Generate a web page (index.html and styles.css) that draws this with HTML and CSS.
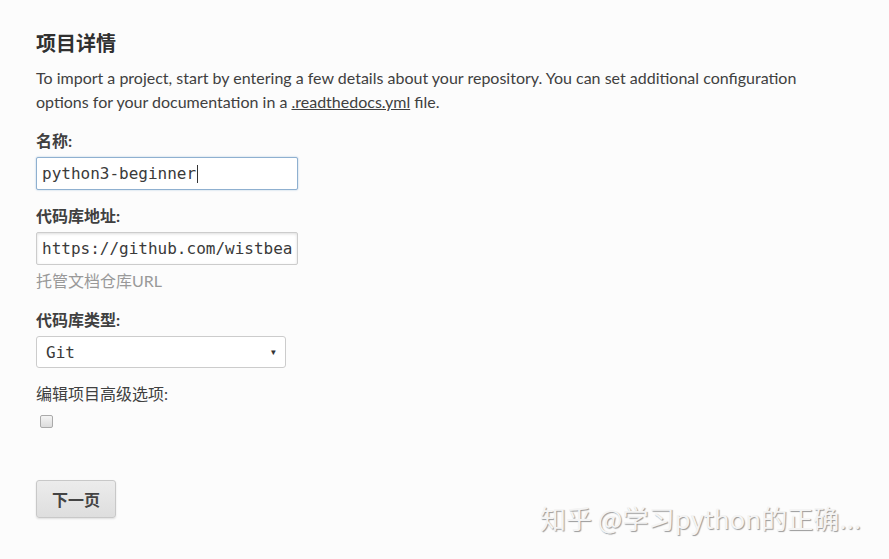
FILE: index.html
```html
<!DOCTYPE html>
<html lang="zh">
<head>
<meta charset="utf-8">
<link rel="stylesheet" href="styles.css">
</head>
<body>
<div class="page">
  <h3 class="title">项目详情</h3>
  <p class="intro">To import a project, start by entering a few details about your repository. You can set additional configuration options for your documentation in a <a href="#" class="link">.readthedocs.yml</a> file.</p>
  <form class="form">
    <div class="field">
      <label class="label">名称:</label>
      <div class="input focused"><span>python3-beginner</span><span class="caret"></span></div>
    </div>
    <div class="field">
      <label class="label">代码库地址:</label>
      <div class="input"><span>https://github.com/wistbea</span></div>
      <div class="help">托管文档仓库URL</div>
    </div>
    <div class="field">
      <label class="label">代码库类型:</label>
      <div class="select"><span>Git</span><span class="arrow">▾</span></div>
    </div>
    <div class="field">
      <label class="label normal">编辑项目高级选项:</label>
      <span class="checkbox"></span>
    </div>
    <div class="actions">
      <button type="button" class="btn">下一页</button>
    </div>
  </form>
</div>
<div class="watermark">知乎 @学习python的正确...</div>
</body>
</html>
```

FILE: styles.css
```css
html, body {
  margin: 0;
  padding: 0;
  background: #fcfcfc;
}
body {
  font-family: Lato, "Noto Sans CJK SC", sans-serif;
  color: #404040;
  width: 889px;
  height: 559px;
  overflow: hidden;
  position: relative;
}
.page {
  padding: 29px 36px 0 36px;
}
.title {
  margin: 0 0 9px 0;
  font-size: 20px;
  font-weight: 700;
  line-height: 28px;
  color: #303030;
}
.intro {
  margin: 0 0 17px 0;
  max-width: 800px;
  font-size: 16px;
  line-height: 24px;
}
.link {
  color: #404040;
  text-decoration: underline;
}
.form {
  display: flex;
  flex-direction: column;
}
.field {
  display: flex;
  flex-direction: column;
  align-items: flex-start;
}
.field + .field {
  margin-top: 16px;
}
.label {
  font-size: 16px;
  font-weight: 700;
  line-height: 20px;
  margin-bottom: 6px;
}
.label.normal {
  font-weight: 400;
  margin-bottom: 11px;
}
.input {
  box-sizing: border-box;
  width: 262px;
  height: 33px;
  border: 1px solid #ccc;
  border-radius: 2px;
  background: #fff;
  box-shadow: inset 0 1px 3px #ddd;
  font-family: "DejaVu Sans Mono", monospace;
  font-size: 16px;
  line-height: 30px;
  padding: 0 5px;
  color: #3a3a3a;
  white-space: nowrap;
  overflow: hidden;
  display: flex;
  align-items: center;
}
.input.focused {
  border-color: #8fb0d0;
  box-shadow: 0 0 2px #a9c4de;
}
.caret {
  display: inline-block;
  width: 1px;
  height: 18px;
  background: #333;
  margin-left: 1px;
}
.help {
  font-size: 16px;
  color: #999;
  line-height: 20px;
  margin-top: 6px;
  margin-bottom: 3px;
}
.select {
  box-sizing: border-box;
  width: 250px;
  height: 32px;
  border: 1px solid #ccc;
  border-radius: 3px;
  background: #fff;
  font-family: "DejaVu Sans Mono", monospace;
  font-size: 16px;
  color: #3a3a3a;
  padding: 0 8px 0 9px;
  display: flex;
  align-items: center;
  justify-content: space-between;
}
.arrow {
  font-size: 12px;
  color: #333;
}
.checkbox {
  display: inline-block;
  box-sizing: border-box;
  width: 13px;
  height: 13px;
  margin-left: 4px;
  border: 1px solid #aaa;
  border-radius: 2px;
  background: linear-gradient(#f4f4f4, #dcdcdc);
}
.actions {
  margin-top: 52px;
}
.btn {
  box-sizing: border-box;
  width: 80px;
  height: 38px;
  border: 1px solid #c8c8c8;
  border-radius: 3px;
  background: linear-gradient(#ececec, #dedede);
  box-shadow: 0 1px 2px rgba(0,0,0,0.12);
  font-family: Lato, "Noto Sans CJK SC", sans-serif;
  font-size: 16px;
  font-weight: 700;
  color: #444;
  cursor: pointer;
  padding: 0;
}
.watermark {
  position: absolute;
  left: 540px;
  top: 499px;
  font-family: "Noto Sans CJK SC", sans-serif;
  font-size: 26px;
  line-height: 38px;
  color: #f4f4f4;
  text-shadow: 1px 1px 1px #9a9a9a;
  white-space: nowrap;
}
```
